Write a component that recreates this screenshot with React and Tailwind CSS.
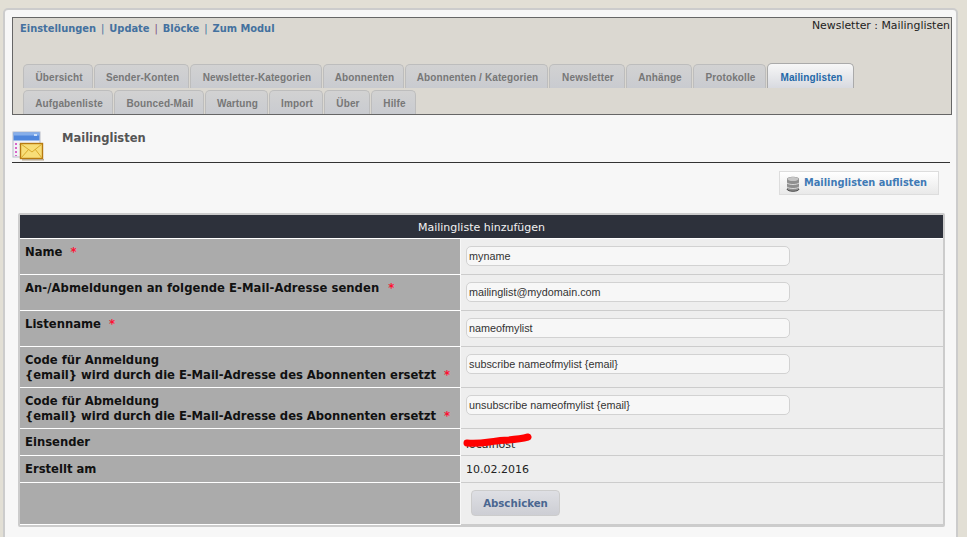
const tabs1 = [["Übersicht", 70], ["Sender-Konten", 95], ["Newsletter-Kategorien", 132], ["Abonnenten", 81], ["Abonnenten / Kategorien", 143], ["Newsletter", 76], ["Anhänge", 66], ["Protokolle", 73]];
const tabs2 = [["Aufgabenliste", 90], ["Bounced-Mail", 90], ["Wartung", 63], ["Import", 54], ["Über", 46], ["Hilfe", 45]];

function Tab({ label, w }) {
  return (
    <div style={{ width: w }} className="h-[24px] shrink-0 rounded-t-[5px] border border-b-0 border-[#bdbdbd] bg-gradient-to-b from-[#d2d2d2] to-[#c9cbd0] pl-[2px] pt-[6px] text-center font-['Liberation_Sans',sans-serif] text-[10px] leading-[13px] font-bold tracking-[0.12px] text-[#777777]">
      {label}
    </div>
  );
}

function Star() {
  return <span className="ml-[4px] font-bold tracking-normal text-[#ff1133]">*</span>;
}

function Row({ h, left, children, pad = "pt-[6px]" }) {
  return (
    <div style={{ height: h }} className="flex border-b border-white">
      <div className={`w-[440px] shrink-0 bg-[#ababab] pl-[5px] text-[11.6px] leading-[15px] font-bold text-[#111111] ${pad}`}>{left}</div>
      <div className="-mb-px ml-px flex-1 border-b border-[#cccccc] bg-[#eeeeee] pl-[5px]">{children}</div>
    </div>
  );
}

function Field({ value, top = 7 }) {
  return (
    <div style={{ marginTop: top }} className="flex h-[20px] w-[324px] items-center rounded-[5px] border border-[#d2d2d2] bg-[#f7f7f7] pl-[2px] font-['Liberation_Sans',sans-serif] text-[10.8px] text-[#333333]">
      {value}
    </div>
  );
}

function MailIcon() {
  return (
    <svg width="32" height="30" viewBox="0 0 32 30" className="shrink-0">
      <rect x="1" y="1" width="27" height="25" fill="#f2f2f6" stroke="#b8bcc8" />
      <rect x="1.5" y="1.5" width="26" height="8" fill="#4f86dc" />
      <rect x="1.5" y="1.5" width="26" height="3" fill="#86aeea" />
      <rect x="22" y="3" width="3" height="2" fill="#cfe0f8" />
      <g fill="#d765c8">
        <rect x="3" y="12" width="2" height="2" />
        <rect x="3" y="16" width="2" height="2" />
        <rect x="3" y="20" width="2" height="2" />
        <rect x="3" y="24" width="2" height="1" />
      </g>
      <rect x="7" y="13" width="18" height="1" fill="#c9ccd6" />
      <rect x="8.5" y="12.5" width="22" height="15" fill="#f8de78" stroke="#b77a10" strokeWidth="1.4" />
      <rect x="10" y="28" width="22" height="1.5" fill="#b9a98f" />
      <path d="M9 13l11 8 10-8M9 27l8-9M30 27l-7-9" fill="none" stroke="#d9a92c" />
    </svg>
  );
}

function DbIcon() {
  return (
    <svg width="14" height="16" viewBox="0 0 14 16" className="shrink-0">
      <path d="M1 3c0-3 12-3 12 0v10c0 3-12 3-12 0z" fill="#8f8f8f" />
      <ellipse cx="7" cy="3" rx="5.5" ry="2" fill="#c6c6c6" />
      <path d="M1 7c2 2 10 2 12 0M1 11c2 2 10 2 12 0" fill="none" stroke="#d8d8d8" />
      <path d="M1 13c0 3 12 3 12 0" fill="none" stroke="#4a4a4a" />
    </svg>
  );
}

export default function App() {
  return (
    <div className="h-[537px] w-[967px] overflow-hidden bg-[#e2dfd5] pl-[3px] pt-[8px] font-['DejaVu_Sans',sans-serif]">
      <div className="h-[560px] w-[955px] rounded-[5px] border-2 border-[#cccccc] bg-[#f7f7f7] pl-[7px] pt-[7px]">
        <div className="flex h-[98px] w-[940px] flex-col border border-[#666666] bg-[#dbd8d1]">
          <div className="flex h-[45px] justify-between">
            <div className="pl-[7px] pt-[4px] text-[9.9px] leading-[14px] font-bold text-[#44719f]">
              Einstellungen <span className="mx-[1.5px] font-normal">|</span> Update <span className="mx-[1.5px] font-normal text-[#7c4f7f]">|</span> Blöcke <span className="mx-[1.5px] font-normal">|</span> Zum Modul
            </div>
            <div className="pr-[1px] pt-[1px] text-[10.9px] leading-[14px] text-[#222222]">Newsletter : Mailinglisten</div>
          </div>
          <div className="flex h-[25px] items-end gap-px pl-[10px]">
            {tabs1.map(([l, w]) => <Tab key={l} label={l} w={w} />)}
            <div className="h-[25px] w-[87px] shrink-0 rounded-t-[5px] border border-b-0 border-[#aaaaaa] bg-gradient-to-b from-[#f7f7f7] to-[#d8dae0] pl-[2px] pt-[7px] text-center font-['Liberation_Sans',sans-serif] text-[10px] leading-[13px] font-bold tracking-[0.12px] text-[#2468a8]">Mailinglisten</div>
          </div>
          <div className="mt-[2px] flex gap-px pl-[10px]">
            {tabs2.map(([l, w]) => <Tab key={l} label={l} w={w} />)}
          </div>
        </div>

        <div className="flex h-[48px] w-[938px] items-end border-b border-[#333333] pb-px">
          <MailIcon />
          <div className="mb-[15px] ml-[18px] text-[11.5px] leading-[16px] font-bold text-[#555555]">Mailinglisten</div>
        </div>

        <div className="flex h-[50px] w-[927px] justify-end pt-[8px]">
          <div className="flex h-[24px] w-[160px] items-center gap-[4px] border border-[#dddddd] bg-gradient-to-b from-[#ffffff] to-[#e9e9e9] pl-[6px] pt-[1px] text-[9.8px] font-bold text-[#3f7ab5]">
            <DbIcon />
            Mailinglisten auflisten
          </div>
        </div>

        <div className="ml-[6px] h-[314px] w-[927px] rounded-[2px] border-2 border-[#cccccc]">
          <div className="flex h-[24px] items-center justify-center border-b border-white bg-[#2d313b] pt-[3px] text-[11px] text-[#f2f2f2]">Mailingliste hinzufügen</div>
          <Row h={36} left={<>Name <Star /></>}><Field value="myname" /></Row>
          <Row h={36} left={<span className="tracking-[0.06px]">An-/Abmeldungen an folgende E-Mail-Adresse senden <span className="ml-[1px]"><Star /></span></span>}><Field value="mailinglist@mydomain.com" /></Row>
          <Row h={36} left={<>Listenname <Star /></>}><Field value="nameofmylist" /></Row>
          <Row h={41} left={<>Code für Anmeldung<br /><span className="tracking-[-0.03px]">{"{email}"} wird durch die E-Mail-Adresse des Abonnenten ersetzt</span> <Star /></>}><Field value="subscribe nameofmylist {email}" /></Row>
          <Row h={41} left={<>Code für Abmeldung<br /><span className="tracking-[-0.03px]">{"{email}"} wird durch die E-Mail-Adresse des Abonnenten ersetzt</span> <Star /></>}><Field value="unsubscribe nameofmylist {email}" /></Row>
          <Row h={27} left="Einsender">
            <div className="relative pt-[8px] text-[11px] leading-[15px] text-[#222222]">
              localhost
              <svg width="72" height="20" viewBox="0 0 72 20" className="absolute -left-[4px] top-0">
                <path d="M5 14c14 1 20-1 30-2 10-1 20-1 31-4" fill="none" stroke="#ff0000" strokeWidth="7" strokeLinecap="round" />
              </svg>
            </div>
          </Row>
          <Row h={27} left="Erstellt am"><div className="pt-[6px] text-[11px] leading-[15px] text-[#222222]">10.02.2016</div></Row>
          <Row h={42} left="">
            <div className="ml-[5px] mt-[7px] flex h-[26px] w-[89px] items-center justify-center rounded-[4px] border border-[#cccccc] bg-gradient-to-b from-[#dedfe4] to-[#cdced4] pt-[1px] text-[10.2px] font-bold text-[#4a6690]">Abschicken</div>
          </Row>
        </div>
      </div>
    </div>
  );
}
